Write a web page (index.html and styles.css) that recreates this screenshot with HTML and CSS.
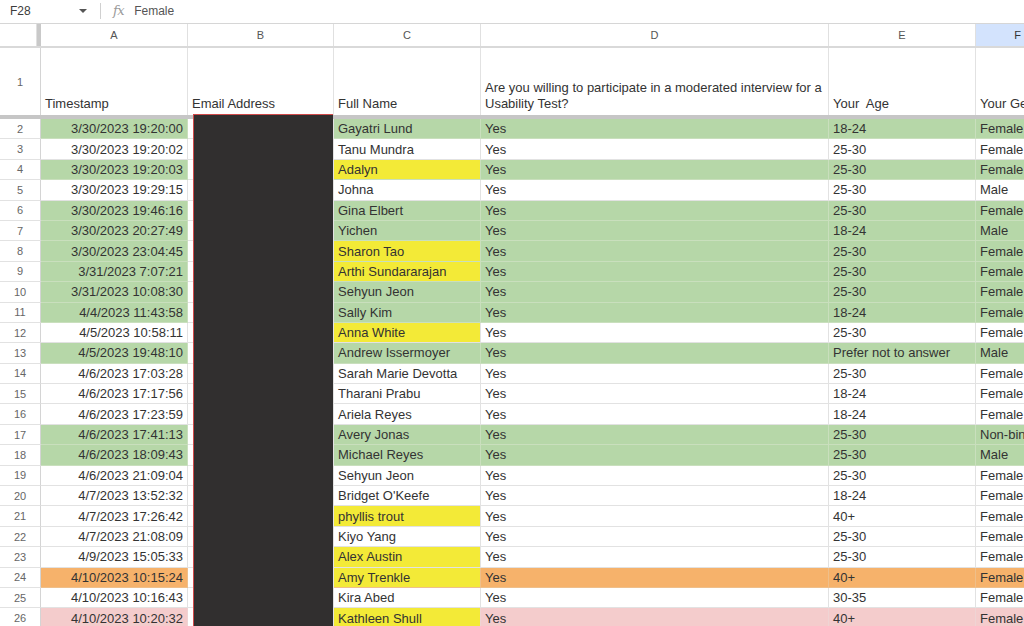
FILE: index.html
```html
<!DOCTYPE html>
<html>
<head>
<meta charset="utf-8">
<link rel="stylesheet" href="styles.css">
</head>
<body>
<div class="fbar">
  <div class="namebox"><span class="ref">F28</span><span class="caret"></span></div>
  <div class="fdiv"></div>
  <span class="fx">fx</span>
  <span class="fval">Female</span>
</div>
<div class="sheet">
  <div class="colheads">
    <div class="corner"></div>
    <div class="vfreeze"></div>
    <div class="ch">A</div><div class="ch">B</div><div class="ch">C</div><div class="ch">D</div><div class="ch">E</div><div class="ch sel">F</div>
  </div>
  <div class="row hdr">
    <div class="rn">1</div>
    <div class="c">Timestamp</div><div class="c">Email Address</div><div class="c">Full Name</div>
    <div class="c wrap">Are you willing to participate in a moderated interview for a Usability Test?</div>
    <div class="c">Your&nbsp; Age</div><div class="c">Your Gender</div>
  </div>
  <div class="hfreeze"></div>
  <div class="row g"><div class="rn">2</div><div class="c a">3/30/2023 19:20:00</div><div class="c b"></div><div class="c n">Gayatri Lund</div><div class="c">Yes</div><div class="c">18-24</div><div class="c">Female</div></div>
  <div class="row"><div class="rn">3</div><div class="c a">3/30/2023 19:20:02</div><div class="c b"></div><div class="c n">Tanu Mundra</div><div class="c">Yes</div><div class="c">25-30</div><div class="c">Female</div></div>
  <div class="row g"><div class="rn">4</div><div class="c a">3/30/2023 19:20:03</div><div class="c b"></div><div class="c n y">Adalyn</div><div class="c">Yes</div><div class="c">25-30</div><div class="c">Female</div></div>
  <div class="row"><div class="rn">5</div><div class="c a">3/30/2023 19:29:15</div><div class="c b"></div><div class="c n">Johna</div><div class="c">Yes</div><div class="c">25-30</div><div class="c">Male</div></div>
  <div class="row g"><div class="rn">6</div><div class="c a">3/30/2023 19:46:16</div><div class="c b"></div><div class="c n">Gina Elbert</div><div class="c">Yes</div><div class="c">25-30</div><div class="c">Female</div></div>
  <div class="row g"><div class="rn">7</div><div class="c a">3/30/2023 20:27:49</div><div class="c b"></div><div class="c n">Yichen</div><div class="c">Yes</div><div class="c">18-24</div><div class="c">Male</div></div>
  <div class="row g"><div class="rn">8</div><div class="c a">3/30/2023 23:04:45</div><div class="c b"></div><div class="c n y">Sharon Tao</div><div class="c">Yes</div><div class="c">25-30</div><div class="c">Female</div></div>
  <div class="row g"><div class="rn">9</div><div class="c a">3/31/2023 7:07:21</div><div class="c b"></div><div class="c n y">Arthi Sundararajan</div><div class="c">Yes</div><div class="c">25-30</div><div class="c">Female</div></div>
  <div class="row g"><div class="rn">10</div><div class="c a">3/31/2023 10:08:30</div><div class="c b"></div><div class="c n">Sehyun Jeon</div><div class="c">Yes</div><div class="c">25-30</div><div class="c">Female</div></div>
  <div class="row g"><div class="rn">11</div><div class="c a">4/4/2023 11:43:58</div><div class="c b"></div><div class="c n">Sally Kim</div><div class="c">Yes</div><div class="c">18-24</div><div class="c">Female</div></div>
  <div class="row"><div class="rn">12</div><div class="c a">4/5/2023 10:58:11</div><div class="c b"></div><div class="c n y">Anna White</div><div class="c">Yes</div><div class="c">25-30</div><div class="c">Female</div></div>
  <div class="row g"><div class="rn">13</div><div class="c a">4/5/2023 19:48:10</div><div class="c b"></div><div class="c n">Andrew Issermoyer</div><div class="c">Yes</div><div class="c">Prefer not to answer</div><div class="c">Male</div></div>
  <div class="row"><div class="rn">14</div><div class="c a">4/6/2023 17:03:28</div><div class="c b"></div><div class="c n">Sarah Marie Devotta</div><div class="c">Yes</div><div class="c">25-30</div><div class="c">Female</div></div>
  <div class="row"><div class="rn">15</div><div class="c a">4/6/2023 17:17:56</div><div class="c b"></div><div class="c n">Tharani Prabu</div><div class="c">Yes</div><div class="c">18-24</div><div class="c">Female</div></div>
  <div class="row"><div class="rn">16</div><div class="c a">4/6/2023 17:23:59</div><div class="c b"></div><div class="c n">Ariela Reyes</div><div class="c">Yes</div><div class="c">18-24</div><div class="c">Female</div></div>
  <div class="row g"><div class="rn">17</div><div class="c a">4/6/2023 17:41:13</div><div class="c b"></div><div class="c n">Avery Jonas</div><div class="c">Yes</div><div class="c">25-30</div><div class="c">Non-binary</div></div>
  <div class="row g"><div class="rn">18</div><div class="c a">4/6/2023 18:09:43</div><div class="c b"></div><div class="c n">Michael Reyes</div><div class="c">Yes</div><div class="c">25-30</div><div class="c">Male</div></div>
  <div class="row"><div class="rn">19</div><div class="c a">4/6/2023 21:09:04</div><div class="c b"></div><div class="c n">Sehyun Jeon</div><div class="c">Yes</div><div class="c">25-30</div><div class="c">Female</div></div>
  <div class="row"><div class="rn">20</div><div class="c a">4/7/2023 13:52:32</div><div class="c b"></div><div class="c n">Bridget O'Keefe</div><div class="c">Yes</div><div class="c">18-24</div><div class="c">Female</div></div>
  <div class="row"><div class="rn">21</div><div class="c a">4/7/2023 17:26:42</div><div class="c b"></div><div class="c n y">phyllis trout</div><div class="c">Yes</div><div class="c">40+</div><div class="c">Female</div></div>
  <div class="row"><div class="rn">22</div><div class="c a">4/7/2023 21:08:09</div><div class="c b"></div><div class="c n">Kiyo Yang</div><div class="c">Yes</div><div class="c">25-30</div><div class="c">Female</div></div>
  <div class="row"><div class="rn">23</div><div class="c a">4/9/2023 15:05:33</div><div class="c b"></div><div class="c n y">Alex Austin</div><div class="c">Yes</div><div class="c">25-30</div><div class="c">Female</div></div>
  <div class="row o"><div class="rn">24</div><div class="c a">4/10/2023 10:15:24</div><div class="c b"></div><div class="c n y">Amy Trenkle</div><div class="c">Yes</div><div class="c">40+</div><div class="c">Female</div></div>
  <div class="row"><div class="rn">25</div><div class="c a">4/10/2023 10:16:43</div><div class="c b"></div><div class="c n">Kira Abed</div><div class="c">Yes</div><div class="c">30-35</div><div class="c">Female</div></div>
  <div class="row p"><div class="rn">26</div><div class="c a">4/10/2023 10:20:32</div><div class="c b"></div><div class="c n y">Kathleen Shull</div><div class="c">Yes</div><div class="c">40+</div><div class="c">Female</div></div>
  <div class="redact"></div>
</div>
</body>
</html>
```

FILE: styles.css
```css
* { box-sizing: border-box; }
html, body { margin: 0; padding: 0; }
body {
  width: 1024px;
  height: 626px;
  overflow: hidden;
  background: #fff;
  font-family: Arial, "Liberation Sans", sans-serif;
  color: #333;
}

.fbar {
  height: 24px;
  display: flex;
  align-items: center;
  border-bottom: 1px solid #d6d6d6;
  font-size: 12px;
  color: #3c3c3c;
  padding-bottom: 2px;
}
.namebox {
  width: 100px;
  display: flex;
  align-items: center;
  padding-left: 10px;
  padding-right: 13px;
}
.ref { flex: 1; }
.caret {
  width: 0; height: 0;
  border-left: 4px solid transparent;
  border-right: 4px solid transparent;
  border-top: 4px solid #555;
}
.fdiv {
  width: 1px;
  height: 16px;
  background: #d0d0d0;
}
.fx {
  margin-left: 12px;
  font-family: "DejaVu Serif", "Liberation Serif", serif;
  font-style: italic;
  color: #9a9a9a;
  font-size: 13px;
  letter-spacing: -0.5px;
}
.fval {
  margin-left: 10px;
  color: #555;
}

.sheet {
  position: relative;
  width: 1024px;
  overflow: hidden;
}

.colheads, .row {
  display: grid;
  grid-template-columns: 41px 147px 146px 147px 348px 147px 84px;
  width: 1060px;
}
.colheads {
  grid-template-columns: 37px 4px 147px 146px 147px 348px 147px 84px;
  height: 24px;
  border-bottom: 2px solid #d9d9d9;
}
.corner { border-right: 1px solid #e0e0e0; }
.vfreeze { background: #c9c9c9; }
.ch {
  display: flex;
  align-items: center;
  justify-content: center;
  font-size: 11px;
  color: #555;
  border-right: 1px solid #e0e0e0;
}
.ch.sel { background: #d3e3fd; color: #333; }

.row { height: 20.4px; }
.rn {
  display: flex;
  align-items: center;
  justify-content: center;
  font-size: 11px;
  color: #666;
  border-right: 1px solid #d4d4d4;
  border-bottom: 1px solid #e2e2e2;
  background: #fff;
}
.c {
  font-size: 13px;
  white-space: nowrap;
  overflow: hidden;
  display: flex;
  align-items: center;
  padding: 0 3px 0 4px;
  border-right: 1px solid #e2e2e2;
  border-bottom: 1px solid #e2e2e2;
  background: #fff;
  color: #333;
}
.c.a { justify-content: flex-end; padding-right: 4px; }

.row.hdr { height: 67px; }
.row.hdr .c {
  align-items: flex-end;
  padding-bottom: 3px;
  line-height: 16px;
  border-bottom: none;
}
.row.hdr .c.wrap { white-space: normal; }
.row.hdr .rn { border-bottom: none; }

.hfreeze {
  height: 4px;
  background: #c6c6c6;
}

.row.g .c:not(.b) { background: #b6d7a8; border-color: #c9dfbd; }
.row.o .c:not(.b) { background: #f6b26b; border-color: #efbf8a; }
.row.p .c:not(.b) { background: #f4cccc; border-color: #efd4d4; }
.row .c.n.y { background: #f3ea37; }

.redact {
  position: absolute;
  left: 193px;
  top: 90px;
  width: 140px;
  height: 540px;
  background: #312f2f;
  border-left: 1px solid #d04a4a;
  border-top: 1px solid #d04a4a;
}
```
